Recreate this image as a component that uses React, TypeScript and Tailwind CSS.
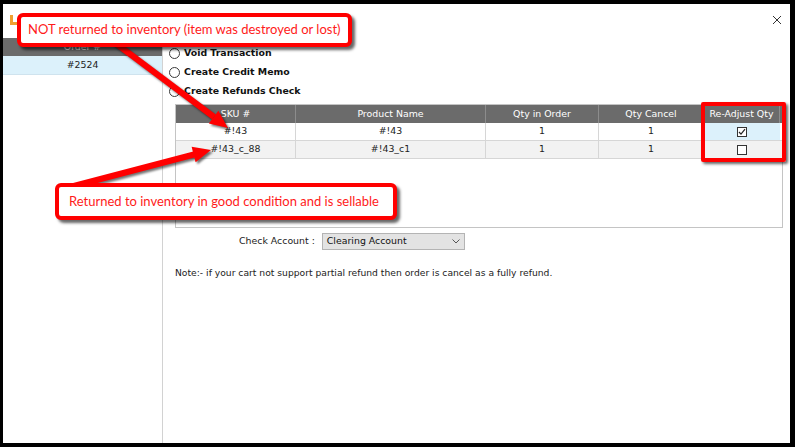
import React from "react";

const F = { fontFamily: '"DejaVu Sans", Verdana, sans-serif' };
const C = { fontFamily: 'Lato, "Open Sans", sans-serif' };

function Radio({ label }: { label: string }) {
  return (
    <div className="h-[19px] flex items-center">
      <div className="w-[11px] h-[11px] rounded-full border border-[#3a3a3a] bg-white" />
      <span className="ml-[4px] font-bold text-[9.4px] text-[#111]">{label}</span>
    </div>
  );
}

function Check({ checked }: { checked?: boolean }) {
  return (
    <div className="w-[10px] h-[10px] border border-[#333] bg-white flex items-center justify-center">
      {checked && (
        <svg width="8" height="8" viewBox="0 0 8 8">
          <path d="M1 4 L3 6.2 L7 1.2" fill="none" stroke="#222" strokeWidth="1.2" />
        </svg>
      )}
    </div>
  );
}

const cols = "grid grid-cols-[120px_190px_113px_105px_76px]";

export default function App() {
  return (
    <div className="relative w-[795px] h-[447px] bg-black pt-[4px] pl-[3px] pr-[5px] pb-[4px] overflow-hidden" style={F}>
      <div className="w-full h-full bg-white flex flex-col">
        <div className="h-[34px] flex items-center justify-between pl-[7px] pr-[8px] shrink-0">
          <div className="w-[8px] h-[10px] border-l-[3px] border-b-[3px] border-[#f0a030] -mt-[2px]" />
          <svg width="10" height="10" viewBox="0 0 10 10" className="-mt-[2px]">
            <path d="M1 1 L9 9 M9 1 L1 9" stroke="#333" strokeWidth="1" />
          </svg>
        </div>
        <div className="flex flex-1">
          <div className="w-[160px] border-r border-[#d2d2d2] shrink-0">
            <div className="h-[18px] bg-[#6b6b6b] text-white text-[9.4px] flex items-center justify-center">Order #</div>
            <div className="h-[19px] bg-[#dcf1fb] border-b border-[#cfe3ee] text-[9.4px] text-[#222] flex items-center justify-center">#2524</div>
          </div>
          <div className="flex-1 pl-[6px] pt-[6px]">
            <Radio label="Void Transaction" />
            <Radio label="Create Credit Memo" />
            <Radio label="Create Refunds Check" />
            <div className="ml-[6px] mt-[3px] w-[608px] h-[124px] border border-[#c4c4c4]">
              <div className={`${cols} h-[18px] bg-[#6b6b6b] text-white text-[9.4px]`}>
                {["SKU #", "Product Name", "Qty in Order", "Qty Cancel", "Re-Adjust Qty"].map((h) => (
                  <div key={h} className="flex items-center justify-center border-r border-[#8c8c8c]">{h}</div>
                ))}
              </div>
              <div className={`${cols} h-[18px] bg-white text-[9.4px] text-[#222] border-b border-[#d6d6d6]`}>
                <div className="flex items-center justify-center border-r border-[#d6d6d6]">#!43</div>
                <div className="flex items-center justify-center border-r border-[#d6d6d6]">#!43</div>
                <div className="flex items-center justify-center border-r border-[#d6d6d6]">1</div>
                <div className="flex items-center justify-center border-r border-[#d6d6d6]">1</div>
                <div className="flex items-center justify-center bg-[#dcf1fb]"><Check checked /></div>
              </div>
              <div className={`${cols} h-[18px] bg-[#f2f2f2] text-[9.4px] text-[#222] border-b border-[#d6d6d6]`}>
                <div className="flex items-center justify-center border-r border-[#d6d6d6]">#!43_c_88</div>
                <div className="flex items-center justify-center border-r border-[#d6d6d6]">#!43_c1</div>
                <div className="flex items-center justify-center border-r border-[#d6d6d6]">1</div>
                <div className="flex items-center justify-center border-r border-[#d6d6d6]">1</div>
                <div className="flex items-center justify-center"><Check /></div>
              </div>
            </div>
            <div className="mt-[5px] flex items-center h-[17px] pl-[70px] text-[9.4px] text-[#222]">
              <span>Check Account :</span>
              <div className="ml-[7px] w-[143px] h-[17px] bg-[#e3e3e3] border border-[#b4b4b4] flex items-center justify-between px-[4px]">
                <span className="text-[#111]">Clearing Account</span>
                <svg width="8" height="5" viewBox="0 0 8 5">
                  <path d="M0.5 0.5 L4 4 L7.5 0.5" fill="none" stroke="#555" strokeWidth="1" />
                </svg>
              </div>
            </div>
            <div className="mt-[16px] ml-[6px] text-[9.2px] text-[#222]">
              Note:- if your cart not support partial refund then order is cancel as a fully refund.
            </div>
          </div>
        </div>
      </div>

      {/* Arrows */}
      <svg className="absolute left-0 top-0 drop-shadow-[2px_2px_1px_rgba(0,0,0,0.55)]" width="795" height="447" viewBox="0 0 795 447">
        <line x1="114" y1="42" x2="214" y2="117" stroke="#ff0000" strokeWidth="6" />
        <polygon points="228,128 208.8,123.5 218.4,110.7" fill="#ff0000" />
        <line x1="70" y1="187" x2="194" y2="154.5" stroke="#ff0000" strokeWidth="6" strokeLinecap="round" />
        <polygon points="211,150 195.6,162.2 191.6,146.8" fill="#ff0000" />
      </svg>

      {/* Red highlight box */}
      <div className="absolute left-[701px] top-[102px] w-[85px] h-[60px] border-[4px] border-[#ff0000] rounded-[2px] shadow-[2px_2px_3px_rgba(0,0,0,0.6)]" />

      {/* Callouts */}
      <div className="absolute left-[17px] top-[13px] w-[335px] h-[34px] bg-white border-[4px] border-[#ff0000] rounded-[6px] shadow-[3px_3px_3px_rgba(0,0,0,0.6)] flex items-center pl-[7px] text-[13px] whitespace-nowrap text-[#ff1a1a]" style={C}>
        NOT returned to inventory (item was destroyed or lost)
      </div>
      <div className="absolute left-[55px] top-[183px] w-[342px] h-[37px] bg-white border-[4px] border-[#ff0000] rounded-[6px] shadow-[3px_3px_3px_rgba(0,0,0,0.6)] flex items-center pl-[10px] text-[13px] whitespace-nowrap text-[#ff1a1a]" style={C}>
        Returned to inventory in good condition and is sellable
      </div>
    </div>
  );
}
